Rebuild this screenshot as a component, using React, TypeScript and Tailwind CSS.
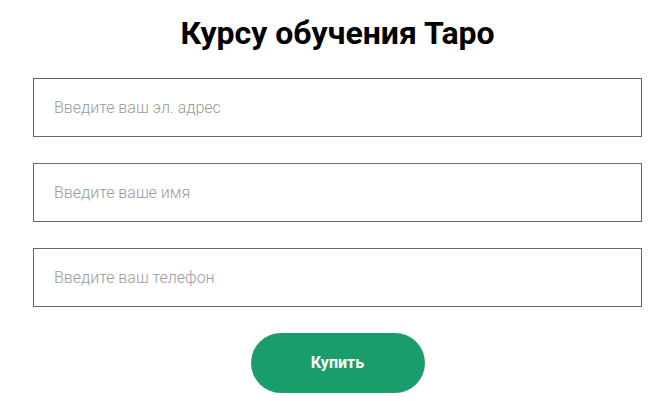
export default function App() {
  const fields = ['Введите ваш эл. адрес', 'Введите ваше имя', 'Введите ваш телефон'];
  return (
    <div className="min-h-[401px] w-[661px] bg-white font-['Roboto',sans-serif]">
      <div className="ml-[33px] w-[609px] pt-[13px] flex flex-col items-center">
        <h1 className="text-[32px] leading-[40px] font-bold text-black">Курсу обучения Таро</h1>
        <div className="mt-[25px] w-full flex flex-col gap-[26px]">
          {fields.map((f) => (
            <input
              key={f}
              placeholder={f}
              className="h-[59px] w-full border border-[#666] px-[20px] text-[16px] font-light text-[#333] placeholder:text-[#9a9a9a] outline-none"
            />
          ))}
        </div>
        <button className="mt-[26px] h-[60px] w-[174px] rounded-full bg-[#1b9d6b] text-white text-[16px] font-bold">
          Купить
        </button>
      </div>
    </div>
  );
}
